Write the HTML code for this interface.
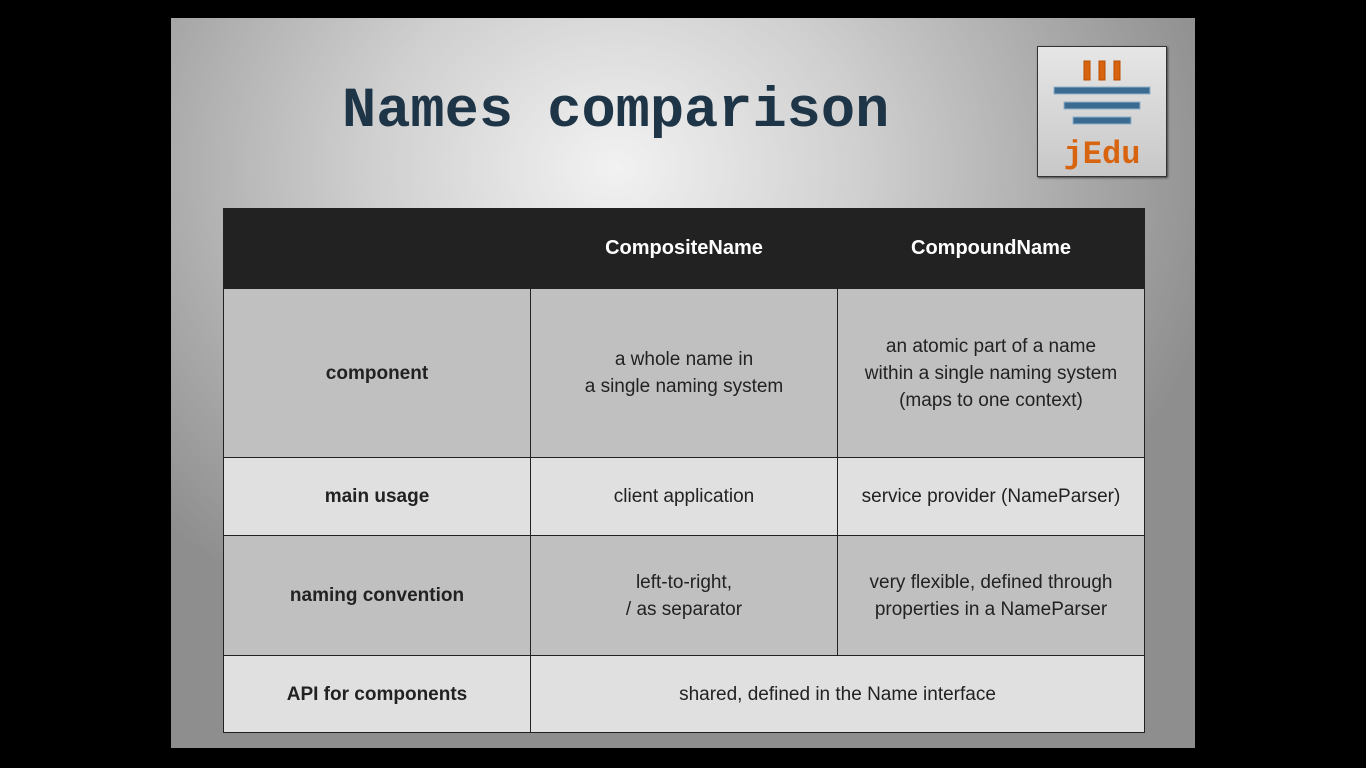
<!DOCTYPE html>
<html><head><style>
body{margin:0;width:1366px;height:768px;background:#000;position:relative;overflow:hidden;font-family:"Liberation Sans",sans-serif}
#s{position:absolute;left:171px;top:18px;width:1024px;height:730px;background:radial-gradient(ellipse 620px 520px at 445px 150px,#f2f2f2 0%,#cfcfcf 40%,#a8a8a8 75%,#8e8e8e 100%)}
h1{position:absolute;left:342px;top:80px;margin:0;font:bold 57px "Liberation Mono",monospace;color:#1e3547;letter-spacing:0}
#logo{position:absolute;left:1037px;top:46px;width:128px;height:129px;border:1px solid #333;background:linear-gradient(#e6e6e6,#c8c8c8);box-shadow:1px 1px 2px #444}
table{position:absolute;left:223px;top:208px;border-collapse:collapse;font-size:19px;color:#222;table-layout:fixed;width:919px}
td,th{border:1px solid #222;text-align:center;padding:0;line-height:27px}
th{background:#222;color:#fff;height:79px;font-size:20px}
.a td{background:#c0c0c0}.b td{background:#e0e0e0}
td:first-child{font-weight:bold}
</style></head><body>
<div id="s"></div>
<h1>Names comparison</h1>
<div id="logo"><svg width="128" height="129">
<g fill="#d8640f" stroke="#b84e00"><rect x="46" y="14" width="6" height="19"/><rect x="61" y="14" width="6" height="19"/><rect x="76" y="14" width="6" height="19"/></g>
<g fill="#3c6b92" stroke="#8fb0c8"><rect x="16" y="40" width="96" height="7"/><rect x="26" y="55" width="76" height="7"/><rect x="35" y="70" width="58" height="7"/></g>
<text x="64" y="116" text-anchor="middle" font-family="Liberation Mono,monospace" font-weight="bold" font-size="32" fill="#d8640f">jEdu</text>
</svg></div>
<table>
<tr><th style="width:306px"></th><th style="width:306px">CompositeName</th><th style="width:306px">CompoundName</th></tr>
<tr class="a" style="height:169px"><td>component</td><td>a whole name in<br>a single naming system</td><td>an atomic part of a name<br>within a single naming system<br>(maps to one context)</td></tr>
<tr class="b" style="height:78px"><td>main usage</td><td>client application</td><td>service provider (NameParser)</td></tr>
<tr class="a" style="height:120px"><td>naming convention</td><td>left-to-right,<br>/ as separator</td><td>very flexible, defined through<br>properties in a NameParser</td></tr>
<tr class="b" style="height:77px"><td>API for components</td><td colspan="2">shared, defined in the Name interface</td></tr>
</table>
</body></html>
